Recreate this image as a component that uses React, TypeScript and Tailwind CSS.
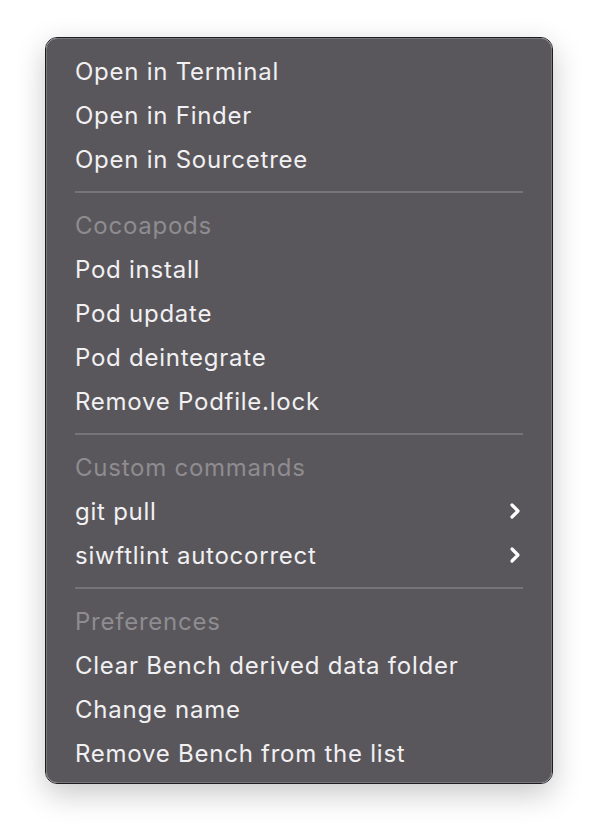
import { ChevronRight } from "lucide-react";

type Item = { label: string; header?: boolean; sub?: boolean };

const SECTIONS: Item[][] = [
  [{ label: "Open in Terminal" }, { label: "Open in Finder" }, { label: "Open in Sourcetree" }],
  [
    { label: "Cocoapods", header: true },
    { label: "Pod install" },
    { label: "Pod update" },
    { label: "Pod deintegrate" },
    { label: "Remove Podfile.lock" },
  ],
  [
    { label: "Custom commands", header: true },
    { label: "git pull", sub: true },
    { label: "siwftlint autocorrect", sub: true },
  ],
  [
    { label: "Preferences", header: true },
    { label: "Clear Bench derived data folder" },
    { label: "Change name" },
    { label: "Remove Bench from the list" },
  ],
];

export default function App() {
  return (
    <div className="w-[598px] h-[838px] bg-white pt-[37px] pl-[45px] font-['Inter','Helvetica_Neue','Liberation_Sans',sans-serif]">
      {/* Menu */}
      <div className="w-[508px] rounded-[12px] border border-[#1e1e20] shadow-[0_10px_30px_rgba(0,0,0,0.22)]">
        <div className="rounded-[11px] border border-[#78767a] bg-[#59575b] pt-[10px] pb-[7px]">
          {SECTIONS.map((section, si) => (
            <div key={si}>
              {si > 0 && (
                <div className="h-[22px] flex items-center px-[28px]">
                  <div className="h-[2px] w-full bg-[#767478]" />
                </div>
              )}
              {section.map(item => (
                <div key={item.label} className="h-[44px] flex items-center justify-between pl-[28px] pr-[24px]">
                  <span className={`pt-[2px] text-[24px] tracking-[0.75px] leading-none ${item.header ? "text-[#8e8c90]" : "text-[#f1f0f2]"}`}>
                    {item.label}
                  </span>
                  {item.sub && <ChevronRight size={24} strokeWidth={3.2} className="text-white" />}
                </div>
              ))}
            </div>
          ))}
        </div>
      </div>
    </div>
  );
}
